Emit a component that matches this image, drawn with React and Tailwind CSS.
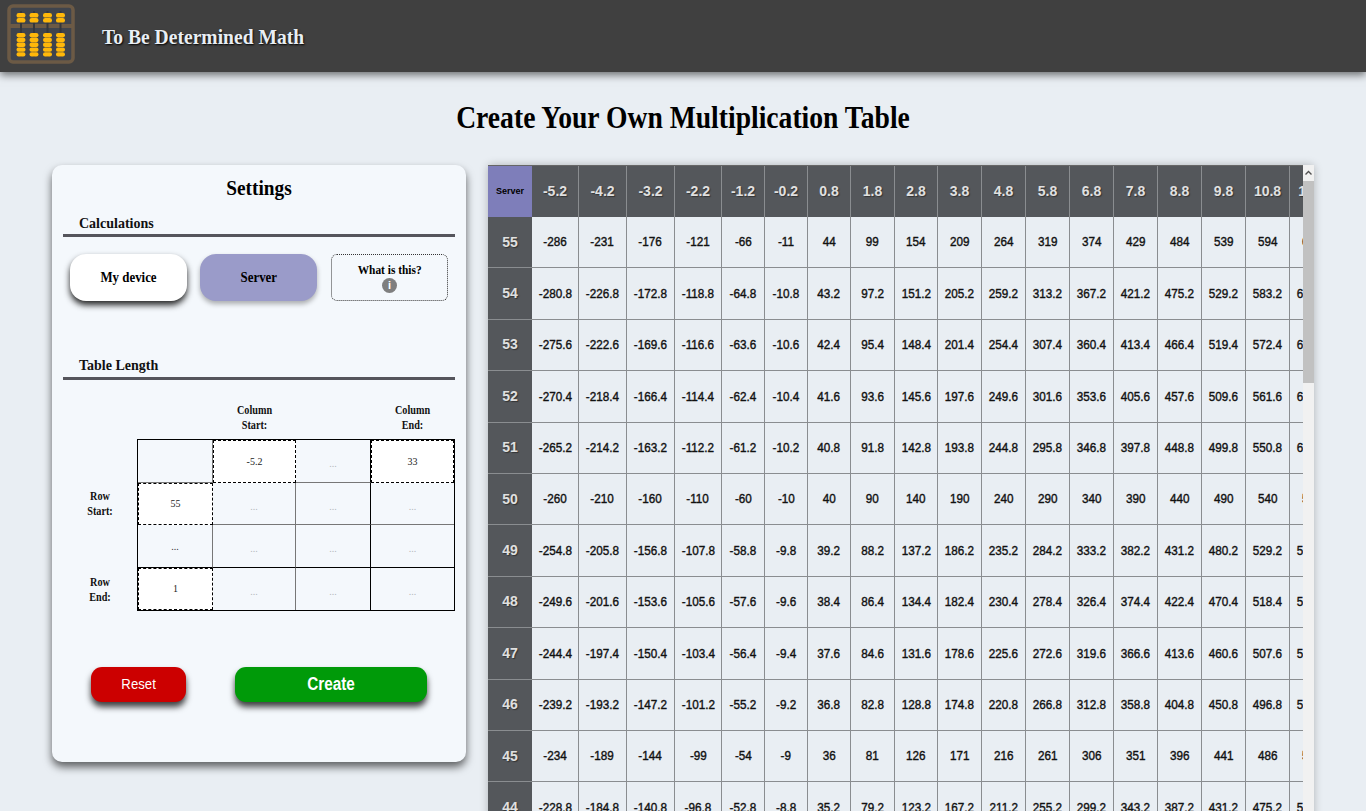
const cols = [-5.2,-4.2,-3.2,-2.2,-1.2,-0.2,0.8,1.8,2.8,3.8,4.8,5.8,6.8,7.8,8.8,9.8,10.8,11.8];
const widths = [47,48,48,47,43,43,43,44,43,44,44,44,44,44,44,44,44,44];
const rows = [55,54,53,52,51,50,49,48,47,46,45,44];
const fmt = (n) => String(Math.round(n * 10) / 10);

function Logo() {
  const xs = [14, 27, 40.5, 53.5];
  return (
    <svg width="68" height="60" viewBox="0 0 68 60" className="shrink-0 -mt-[4px]">
      <rect x="2" y="2" width="64" height="56" rx="4" fill="#3f444d" stroke="#6c5a45" strokeWidth="3.5" />
      <rect x="3" y="20" width="62" height="4" fill="#6c5a45" />
      {xs.map((x) => (
        <g key={x}>
          <rect x={x - 1} y="7" width="2" height="46" fill="#34373d" />
          {[9, 14].map((y) => <rect key={y} x={x - 4.5} y={y} width="9" height="4.6" rx="2.2" fill="#ffb80a" />)}
          {[29, 33.8, 38.6, 43.4, 48.2].map((y) => <rect key={y} x={x - 4.5} y={y} width="9" height="4.4" rx="2.1" fill="#ffb80a" />)}
        </g>
      ))}
    </svg>
  );
}

function Input({ v }) {
  return <div className="flex items-center justify-center bg-white border border-dashed border-black text-[10px] text-[#222] pb-[1px] h-full">{v}</div>;
}

function Dots({ className = "" }) {
  return <div className={`flex items-center justify-center text-[10px] text-[#b4b8bc] pt-[5px] ${className}`}>...</div>;
}

const sectionHead = "text-[14px] font-bold text-[#111] pl-[16px] leading-[16px] border-b-[3px] border-[#55555c] pb-[2px]";
const gridCols = "grid grid-cols-[75px_83px_75px_83px]";

export default function App() {
  return (
    <div className="h-screen overflow-hidden bg-[#e9eef3] font-['Liberation_Serif',serif] text-black">
      <header className="h-[72px] bg-[#404040] flex items-center pl-[7px] shadow-[0_3px_8px_rgba(0,0,0,0.55)] relative z-10">
        <Logo />
        <div className="ml-[27px] text-[22px] font-bold text-[#e8eef4] [text-shadow:1px_1px_2px_#000] scale-x-[0.89] origin-left">To Be Determined Math</div>
      </header>
      <h1 className="text-center font-bold text-[32px] leading-[36px] mt-[27px] scale-x-[0.863]">Create Your Own Multiplication Table</h1>
      <div className="flex items-start mt-[30px] pl-[52px] gap-[22px]">
        <aside className="w-[414px] h-[597px] shrink-0 bg-[#f4f8fc] rounded-[10px] shadow-[0_5px_8px_rgba(0,0,0,0.6)] px-[11px] pt-[10px]">
          <div className="text-center text-[21px] font-bold leading-[26px] scale-x-[0.92]">Settings</div>
          <div className={`${sectionHead} mt-[15px]`}>Calculations</div>
          <div className="flex gap-[13px] mt-[17px] pl-[7px]">
            <div className="w-[117px] h-[47px] rounded-[16px] bg-white flex items-center justify-center text-[14px] font-bold shadow-[0_4px_6px_rgba(0,0,0,0.85)]"><span className="scale-x-[0.92]">My device</span></div>
            <div className="w-[117px] h-[47px] rounded-[16px] bg-[#9a9bc9] flex items-center justify-center text-[14px] font-bold shadow-[0_3px_5px_rgba(0,0,0,0.3)]"><span className="scale-x-[0.92]">Server</span></div>
            <div className="ml-[1px] w-[117px] h-[47px] rounded-[6px] border border-dotted border-[#333] flex flex-col items-center justify-center text-[12px] font-bold leading-[15px]">
              <span className="scale-x-[0.95]">What is this?</span>
              <span className="w-[15px] h-[15px] rounded-full bg-[#7f7f7f] text-white text-[11px] leading-[15px] text-center font-['Liberation_Sans',sans-serif]">i</span>
            </div>
          </div>
          <div className={`${sectionHead} mt-[57px] pb-[3px]`}>Table Length</div>
          <div className="flex mt-[24px]">
            <div className="w-[74px] shrink-0 pt-[85px] px-[5px] text-[12px] font-bold leading-[14.5px] text-center text-[#111]">
              <div className="h-[86px] scale-x-[0.85]">Row<br />Start:</div>
              <div className="scale-x-[0.85]">Row<br />End:</div>
            </div>
            <div className="w-[318px]">
              <div className={`${gridCols} pl-px h-[35px] -mt-[1px] mb-[1px] text-[12px] font-bold leading-[14.5px] text-center text-[#111]`}>
                <div />
                <div className="scale-x-[0.85]">Column<br />Start:</div>
                <div />
                <div className="scale-x-[0.85]">Column<br />End:</div>
              </div>
              <div className={`${gridCols} grid-rows-[43px_42px_43px_42px] border border-black`}>
                <div className="border-r border-b border-[#777]" />
                <Input v="-5.2" />
                <Dots className="border-r border-r-black border-b border-b-[#777]" />
                <Input v="33" />
                <Input v="55" />
                <Dots className="border-r border-b border-[#777]" />
                <Dots className="border-r border-r-black border-b border-b-[#777]" />
                <Dots className="border-b border-[#777]" />
                <div className="flex items-center justify-center text-[10px] text-[#333] border-r border-r-[#777] border-b border-b-black">...</div>
                <Dots className="border-r border-r-[#777] border-b border-b-black" />
                <Dots className="border-r border-r-black border-b border-b-black" />
                <Dots className="border-b border-b-black" />
                <Input v="1" />
                <Dots className="border-r border-[#777]" />
                <Dots className="border-r border-black" />
                <Dots />
              </div>
            </div>
          </div>
          <div className="flex mt-[56px] pl-[28px] gap-[49px] font-['Liberation_Sans',sans-serif] text-white">
            <div className="w-[95px] h-[35px] rounded-[11px] bg-[#cc0000] flex items-center justify-center text-[15px] shadow-[0_5px_6px_rgba(0,0,0,0.75)]"><span className="scale-x-[0.88]">Reset</span></div>
            <div className="w-[192px] h-[35px] rounded-[11px] bg-[#009a09] flex items-center justify-center text-[18px] font-bold shadow-[0_5px_6px_rgba(0,0,0,0.75)]"><span className="scale-x-[0.85]">Create</span></div>
          </div>
        </aside>
        <main className="w-[826px] h-[700px] flex bg-[#e9eef3] shadow-[0_0_8px_rgba(0,0,0,0.25)] font-['Liberation_Sans',sans-serif] rounded-t-[4px]">
          <div className="w-[815px] overflow-hidden">
            <div className="w-[900px] border-t border-t-[#666]">
              <div className="flex h-[51px]">
                <div className="w-[44px] shrink-0 bg-[#7e7eba] flex items-center justify-center text-[9px] font-bold text-black">Server</div>
                {cols.map((c, i) => (
                  <div key={c} style={{ width: widths[i] }} className="shrink-0 bg-[#54575b] border-r border-[#8a8d90] flex items-center justify-center text-[14px] font-bold text-[#e0e0e0] [text-shadow:1px_1px_1px_#333]">{c}</div>
                ))}
              </div>
              {rows.map((r) => (
                <div key={r} className="flex h-[51.4px]">
                  <div className="w-[44px] shrink-0 bg-[#54575b] border-b border-[#8a8d90] flex items-center justify-center text-[14px] font-bold text-[#e0e0e0] [text-shadow:1px_1px_1px_#333]">{r}</div>
                  {cols.map((c, i) => (
                    <div key={c} style={{ width: widths[i] }} className="shrink-0 border-r border-b border-[#8a8d90] flex items-center justify-center text-[13px] text-[#111] [-webkit-text-stroke:0.4px_#111]"><span className="scale-x-[0.9]">{fmt(r * c)}</span></div>
                  ))}
                </div>
              ))}
            </div>
          </div>
          <div className="w-[11px] shrink-0 bg-[#f1f1f1] flex flex-col items-center">
            <svg width="11" height="16" viewBox="0 0 11 16"><path d="M2.5 9.5 L5.5 6.5 L8.5 9.5" fill="none" stroke="#505050" strokeWidth="1.4" /></svg>
            <div className="w-full h-[202px] bg-[#c1c1c1]" />
          </div>
        </main>
      </div>
    </div>
  );
}
